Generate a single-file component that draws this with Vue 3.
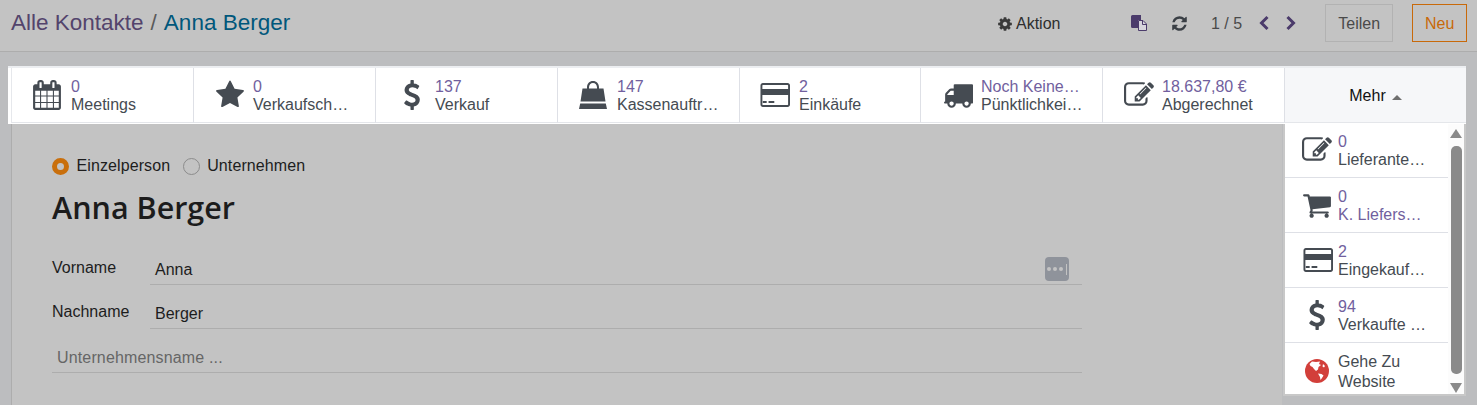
<template>
  <div class="page">
    <header class="control-panel">
      <div class="breadcrumb">
        <a class="crumb-link">Alle Kontakte</a>
        <span class="crumb-sep">/</span>
        <span class="crumb-active">Anna Berger</span>
      </div>
      <div class="action">
        <svg class="cog" viewBox="0 0 1792 1792"><path :d="icons.cog" /></svg>
        <span>Aktion</span>
      </div>
      <svg class="files" viewBox="0 0 16 16">
        <path d="M0 1.5Q0 0 1.5 0H10V5H7V13H1.5Q0 13 0 11.5z" fill="#4b3b6b" />
        <path d="M7.5 5.5H12L15.5 9V15.5H7.5z" fill="#d6d4dc" stroke="#4b3b6b" />
        <path d="M11.5 5.5V9.5H15.5" fill="none" stroke="#4b3b6b" />
      </svg>
      <svg class="refresh" viewBox="0 0 1792 1792"><path :d="icons.refresh" /></svg>
      <span class="pager">1 / 5</span>
      <svg class="chev chev-left" viewBox="0 0 12 16"><path d="M9.5 2 3.5 8l6 6" /></svg>
      <svg class="chev chev-right" viewBox="0 0 12 16"><path d="M2.5 2l6 6-6 6" /></svg>
      <button class="btn btn-share">Teilen</button>
      <button class="btn btn-new">Neu</button>
    </header>

    <main class="content">
      <div class="sheet-wrap">
        <div class="button-box">
          <div v-for="item in stats" :key="item.label" class="stat">
            <svg class="stat-icon" :class="item.cls" :viewBox="item.box" :preserveAspectRatio="item.ratio"><path :d="item.path" /></svg>
            <div class="stat-text">
              <span class="stat-value">{{ item.value }}</span>
              <span class="stat-label">{{ item.label }}</span>
            </div>
          </div>
          <div class="more">Mehr <i class="caret"></i></div>
        </div>

        <section class="sheet">
          <div class="radios">
            <span class="radio radio-on"></span>
            <span class="radio-label">Einzelperson</span>
            <span class="radio"></span>
            <span class="radio-label">Unternehmen</span>
          </div>
          <h1 class="name">Anna Berger</h1>
          <div class="fields">
            <div class="field">
              <label>Vorname</label>
              <div class="input">
                Anna
                <span class="dots"><i></i><i></i><i></i><b></b></span>
              </div>
            </div>
            <div class="field">
              <label>Nachname</label>
              <div class="input">Berger</div>
            </div>
            <div class="company">Unternehmensname ...</div>
          </div>
        </section>

        <div class="dropdown">
          <div class="menu-list">
            <div v-for="item in menu" :key="item.label" class="menu-item">
              <svg v-if="item.path" class="stat-icon" :class="item.cls" :viewBox="item.box" :preserveAspectRatio="item.ratio"><path :d="item.path" /></svg>
              <svg v-else class="globe" viewBox="0 0 24 24">
                <circle cx="12" cy="12" r="12" fill="#d23f3a" />
                <path d="M7 2.5L11 3 15 2.5 14 5 16 6 13.5 8 13 10.5 11 12 9 10 7.5 8 5.5 7 4.5 5zM13 14.5L16.5 15 18.5 16.5 17 19 15.5 21 15 18zM18 5l2 2-1 1.5-1.5-1z" fill="#fff" />
              </svg>
              <div class="stat-text">
                <span v-if="item.value" class="stat-value">{{ item.value }}</span>
                <span class="stat-label" :class="{ link: item.link, wrap: !item.value }">{{ item.label }}</span>
              </div>
            </div>
          </div>
          <div class="scrollbar">
            <i class="arrow arrow-up"></i>
            <div class="thumb"></div>
            <i class="arrow arrow-down"></i>
          </div>
        </div>
      </div>
    </main>
  </div>
</template>

<script setup>
const icons = {
  cog: 'M1152 896q0-106-75-181t-181-75-181 75-75 181 75 181 181 75 181-75 75-181zm512-109v222q0 12-8 23t-20 13l-185 28q-19 54-39 91 35 50 107 138 10 12 10 25t-9 23q-27 37-99 108t-94 71q-12 0-26-9l-138-108q-44 23-91 38-16 136-29 186-7 28-36 28h-222q-14 0-24.5-8.5t-11.5-21.5l-28-184q-49-16-90-37l-141 107q-10 9-25 9-14 0-25-11-126-114-165-168-7-10-7-23 0-12 8-23 15-21 51-66.5t54-70.5q-27-50-41-99l-183-27q-13-2-21-12.5t-8-23.5v-222q0-12 8-23t19-13l186-28q14-46 39-92-40-57-107-138-10-12-10-24 0-10 9-23 26-36 98.5-107.5t94.5-71.5q13 0 26 10l138 107q44-23 91-38 16-136 29-186 7-28 36-28h222q14 0 24.5 8.5t11.5 21.5l28 184q49 16 90 37l142-107q9-9 24-9 13 0 25 10 129 119 165 170 7 8 7 22 0 12-8 23-15 21-51 66.5t-54 70.5q26 50 41 98l183 28q13 2 21 12.5t8 23.5z',
  refresh: 'M1639 1056q0 5-1 7-64 268-268 434.5t-478 166.5q-146 0-282.5-55t-243.5-157l-129 129q-19 19-45 19t-45-19-19-45v-448q0-26 19-45t45-19h448q26 0 45 19t19 45-19 45l-137 137q71 66 161 102t187 36q134 0 250-65t186-179q11-17 53-117 8-23 30-23h192q13 0 22.5 9.5t9.5 22.5zm25-800v448q0 26-19 45t-45 19h-448q-26 0-45-19t-19-45 19-45l138-138q-148-137-349-137-134 0-250 65t-186 179q-11 17-53 117-8 23-30 23h-199q-13 0-22.5-9.5t-9.5-22.5v-7q65-268 270-434.5t480-166.5q146 0 284 55.5t245 156.5l130-129q19-19 45-19t45 19 19 45z',
  calendar: 'M192 1664h288v-288h-288v288zm352 0h320v-288h-320v288zm-352-352h288v-320h-288v320zm352 0h320v-320h-320v320zm-352-384h288v-288h-288v288zm736 736h320v-288h-320v288zm-384-736h320v-288h-320v288zm768 736h288v-288h-288v288zm-384-352h320v-320h-320v320zm-352-864v-288q0-13-9.5-22.5t-22.5-9.5h-64q-13 0-22.5 9.5t-9.5 22.5v288q0 13 9.5 22.5t22.5 9.5h64q13 0 22.5-9.5t9.5-22.5zm736 864h288v-320h-288v320zm-384-384h320v-288h-320v288zm384 0h288v-288h-288v288zm32-480v-288q0-13-9.5-22.5t-22.5-9.5h-64q-13 0-22.5 9.5t-9.5 22.5v288q0 13 9.5 22.5t22.5 9.5h64q13 0 22.5-9.5t9.5-22.5zm384-64v1280q0 52-38 90t-90 38h-1408q-52 0-90-38t-38-90v-1280q0-52 38-90t90-38h128v-96q0-66 47-113t113-47h64q66 0 113 47t47 113v96h384v-96q0-66 47-113t113-47h64q66 0 113 47t47 113v96h128q52 0 90 38t38 90z',
  star: 'M1728 647q0 22-26 48l-363 354 86 500q1 7 1 20 0 21-10.5 35.5t-30.5 14.5q-19 0-40-12l-449-236-449 236q-22 12-40 12-21 0-31.5-14.5t-10.5-35.5q0-6 2-20l86-500-364-354q-25-27-25-48 0-37 56-46l502-73 225-455q19-41 49-41t49 41l225 455 502 73q56 9 56 46z',
  dollar: 'M1362 1185q0 153-99.5 263.5t-258.5 136.5v175q0 14-9 23t-23 9h-135q-13 0-22.5-9.5t-9.5-22.5v-175q-66-9-127.5-31t-101.5-44.5-74-48-46.5-37.5-17.5-18q-17-21-2-41l103-135q7-10 23-12 15-2 24 9l2 2q113 99 243 125 37 8 74 8 81 0 142.5-43t61.5-122q0-28-15-53t-33.5-42-58.5-37.5-66-32-80-32.5q-39-16-61.5-25t-61.5-26.5-62.5-31-56.5-35.5-53.5-42.5-43.5-49-35.5-58-21-66.5-8.5-78q0-138 98-242t255-134v-180q0-13 9.5-22.5t22.5-9.5h135q14 0 23 9t9 23v176q57 6 110.5 23t87 33.5 63.5 37.5 39 29 15 14q17 18 5 38l-81 146q-8 15-23 16-14 3-27-7-3-3-14.5-12t-39-26.5-58.5-32-74.5-26-85.5-11.5q-95 0-155 43t-60 111q0 26 8.5 48t29.5 41.5 39.5 33 56 31 60.5 27 70 27.5q53 20 81 31.5t76 35 75.5 42.5 62 50 53 63.5 31.5 76.5 13 94z',
  bag: 'M8 7.5V6.5C8 2.5 10.5 0 14 0s6 2.5 6 6.5V7.5H24.5L26.5 20.5H1.5L3.5 7.5H8zM10 7.5H18V6.5C18 3.8 16.3 2 14 2S10 3.8 10 6.5V7.5zM1.2 22.5H26.8L28 28H0z',
  card: 'M1856 128q66 0 113 47t47 113v1216q0 66-47 113t-113 47h-1664q-66 0-113-47t-47-113v-1216q0-66 47-113t113-47h1664zm-1664 128q-13 0-22.5 9.5t-9.5 22.5v224h1728v-224q0-13-9.5-22.5t-22.5-9.5h-1664zm1664 1280q13 0 22.5-9.5t9.5-22.5v-608h-1728v608q0 13 9.5 22.5t22.5 9.5h1664zm-1664-128v-128h256v128h-256zm384 0v-128h384v128h-384z',
  truck: 'M640 1408q0-52-38-90t-90-38-90 38-38 90 38 90 90 38 90-38 38-90zm-384-512h384v-256h-158q-13 0-22 9l-195 195q-9 9-9 22v30zm1280 512q0-52-38-90t-90-38-90 38-38 90 38 90 90 38 90-38 38-90zm256-1088v1024q0 15-4 26.5t-13.5 18.5-16.5 11.5-23.5 6-22.5 2-25.5 0-22.5-.5q0 106-75 181t-181 75-181-75-75-181h-384q0 106-75 181t-181 75-181-75-75-181h-64q-3 0-22.5.5t-25.5 0-22.5-2-23.5-6-16.5-11.5-13.5-18.5-4-26.5q0-26 19-45t45-19v-320q0-8-.5-35t0-38 2.5-34.5 6.5-37 14-30.5 22.5-30l198-198q19-19 50.5-32t58.5-13h160v-192q0-26 19-45t45-19h1024q26 0 45 19t19 45z',
  edit: 'M888 1184l116-116-152-152-116 116v56h96v96h56zm440-720q-16-16-33 1l-350 350q-17 17-1 33t33-1l350-350q17-17 1-33zm80 594v190q0 119-84.5 203.5t-203.5 84.5h-832q-119 0-203.5-84.5t-84.5-203.5v-832q0-119 84.5-203.5t203.5-84.5h832q63 0 117 25 15 7 18 23 3 17-9 29l-49 49q-14 14-32 8-23-6-45-6h-832q-66 0-113 47t-47 113v832q0 66 47 113t113 47h832q66 0 113-47t47-113v-126q0-13 9-22l64-64q15-15 35-7t20 29zm-96-738l288 288-672 672h-288v-288zm444 132l-92 92-288-288 92-92q28-28 68-28t68 28l152 152q28 28 28 68t-28 68z',
  cart: 'M704 1536q0 52-38 90t-90 38-90-38-38-90 38-90 90-38 90 38 38 90zm896 0q0 52-38 90t-90 38-90-38-38-90 38-90 90-38 90 38 38 90zm128-1088v512q0 24-16.5 42.5t-40.5 21.5l-1044 122q13 60 13 70 0 16-24 64h920q26 0 45 19t19 45-19 45-45 19h-1024q-26 0-45-19t-19-45q0-11 8-31.5t16-36 21.5-40 15.5-29.5l-177-823h-204q-26 0-45-19t-19-45 19-45 45-19h256q16 0 28.5 6.5t19.5 15.5 13 24.5 8 26 5.5 29.5 4.5 26h1201q26 0 45 19t19 45z'
}

const square = '0 0 1792 1792'
const cardBox = '0 128 2016 1536'

const stats = [
  { value: '0', label: 'Meetings', path: icons.calendar, box: square, cls: 'i-calendar' },
  { value: '0', label: 'Verkaufsch…', path: icons.star, box: square, cls: 'i-star' },
  { value: '137', label: 'Verkauf', path: icons.dollar, box: square, cls: 'i-dollar' },
  { value: '147', label: 'Kassenauftr…', path: icons.bag, box: '0 0 28 28', cls: 'i-bag' },
  { value: '2', label: 'Einkäufe', path: icons.card, box: cardBox, cls: 'i-card', ratio: 'none' },
  { value: 'Noch Keine…', label: 'Pünktlichkei…', path: icons.truck, box: square, cls: 'i-truck' },
  { value: '18.637,80 €', label: 'Abgerechnet', path: icons.edit, box: square, cls: 'i-edit' }
]

const menu = [
  { value: '0', label: 'Lieferante…', path: icons.edit, box: square, cls: 'i-edit' },
  { value: '0', label: 'K. Liefers…', path: icons.cart, box: square, cls: 'i-cart', link: true },
  { value: '2', label: 'Eingekauf…', path: icons.card, box: cardBox, cls: 'i-card', ratio: 'none' },
  { value: '94', label: 'Verkaufte …', path: icons.dollar, box: square, cls: 'i-dollar' },
  { value: '', label: 'Gehe Zu Website' }
]
</script>

<style>
html,
body {
  margin: 0;
  background: #bcbdbf;
}
</style>

<style scoped>
.page {
  height: 405px;
  overflow: hidden;
  font-family: "Liberation Sans", Arial, sans-serif;
  font-size: 16px;
  color: #4c4c4c;
}

.control-panel {
  height: 51px;
  box-sizing: content-box;
  display: flex;
  align-items: center;
  padding: 0 0 0 11px;
  background: #c3c3c3;
  border-bottom: 1px solid #adadad;
}

.breadcrumb {
  display: flex;
  align-items: center;
  font-size: 22.5px;
  width: 980px;
  flex: none;
  margin-top: -5px;
}

.crumb-link {
  color: #53446c;
}

.crumb-sep {
  color: #5a5a5a;
  margin: 0 7px;
}

.crumb-active {
  color: #00577b;
}

.action {
  width: 134px;
  flex: none;
  margin-left: 6px;
  margin-top: -4px;
  display: flex;
  align-items: center;
  gap: 3px;
  color: #2e2e2e;
}

.cog {
  width: 16px;
  height: 16px;
  fill: #3a3a3a;
}

.files {
  width: 16px;
  height: 16px;
  flex: none;
  margin-top: -5px;
}

.refresh {
  width: 17px;
  height: 17px;
  flex: none;
  margin: -5px 0 0 24px;
  fill: #3a3f45;
}

.pager {
  margin: -4px 0 0 23px;
  color: #4a4a4a;
  white-space: nowrap;
}

.chev {
  width: 12px;
  height: 16px;
  flex: none;
  margin-top: -5px;
  fill: none;
  stroke: #4b3b6b;
  stroke-width: 3;
}

.chev-left {
  margin-left: 16px;
}

.chev-right {
  margin-left: 15px;
}

.btn {
  height: 38px;
  margin-top: -5px;
  box-sizing: border-box;
  background: transparent;
  font: inherit;
  padding: 2px 0 0;
}

.btn-share {
  width: 68px;
  margin-left: 28px;
  border: 1px solid #b2b2b2;
  color: #4a4a4a;
}

.btn-new {
  width: 55px;
  margin-left: 19px;
  border: 1px solid #c8690a;
  color: #c8690a;
}

.content {
  padding-top: 14px;
}

.sheet-wrap {
  position: relative;
  padding: 0 11px 0 8px;
}

.button-box {
  position: relative;
  z-index: 2;
  display: flex;
  height: 58px;
  box-sizing: border-box;
  background: #fff;
  border-top: 2px solid #eceef1;
  padding: 0 0 1px 4px;
}

.stat {
  width: 182px;
  flex: none;
  box-sizing: border-box;
  display: flex;
  align-items: center;
  border-right: 1px solid #dee0e6;
  border-bottom: 1px solid #e4e6ea;
  padding-left: 21px;
}

.stat:nth-child(5) {
  width: 181px;
}

.stat:first-child {
  box-shadow: -1px 0 0 #e6e8ec;
}

.stat-icon {
  width: 30px;
  height: 30px;
  flex: none;
  fill: #454b52;
}

.stat-text {
  display: flex;
  flex-direction: column;
  line-height: 18.5px;
  margin: 2px 0 0 8px;
  white-space: nowrap;
}

.stat-value {
  color: #715f9e;
}

.stat-label {
  color: #454b52;
}

.stat-label.link {
  color: #715f9e;
}

.stat-label.wrap {
  width: 80px;
  white-space: normal;
  line-height: 20px;
}

.i-calendar {
  margin: 0 1px 0 -1px;
}

.i-truck {
  margin-left: 1px;
}

.i-card {
  height: 24px;
  margin: 0 1px 0 -1px;
}

.i-bag {
  width: 28px;
  height: 28px;
  margin-right: 2px;
}

.i-bag path {
  fill-rule: evenodd;
}

.more {
  flex: 1;
  background: #f6f7f9;
  border-bottom: 1px solid #e4e6ea;
  padding-top: 2px;
  display: flex;
  align-items: center;
  justify-content: center;
  gap: 6px;
  color: #111;
}

.caret {
  width: 0;
  height: 0;
  border: 5px solid transparent;
  border-top: 0;
  border-bottom-color: #6f6f6f;
  margin-top: 2px;
}

.sheet {
  margin-left: 3px;
  width: 1271px;
  height: 300px;
  box-sizing: border-box;
  background: #c3c3c3;
  border-left: 1px solid #adadad;
  padding: 32px 0 0 40px;
  color: #1d1d1d;
}

.radios {
  display: flex;
  align-items: center;
  height: 20px;
  letter-spacing: 0.1px;
}

.radio {
  width: 17px;
  height: 17px;
  box-sizing: border-box;
  border-radius: 50%;
  border: 1px solid #8c8c8c;
  flex: none;
}

.radio-on {
  border: 5px solid #c96f0c;
  background: #c3c3c3;
}

.radio-label {
  margin: 0 12.5px 0 7.5px;
}

.name {
  margin: 11px 0 0;
  font-family: "Open Sans", "Noto Sans", sans-serif;
  font-size: 30.5px;
  font-weight: 600;
  line-height: 40px;
  color: #1c1c1c;
}

.fields {
  margin-top: 14px;
}

.field {
  display: flex;
  width: 1030px;
  height: 44px;
  box-sizing: border-box;
}

.field label {
  width: 98px;
  flex: none;
  padding-top: 18px;
  line-height: 18px;
}

.input {
  flex: 1;
  position: relative;
  padding: 20px 0 0 5px;
  line-height: 18px;
  border-bottom: 1px solid #adadad;
}

.dots {
  position: absolute;
  right: 13px;
  top: 16px;
  width: 24px;
  height: 24px;
  border-radius: 4px;
  background: #8f939b;
  display: flex;
  align-items: center;
  justify-content: center;
  gap: 2px;
}

.dots i {
  width: 4px;
  height: 4px;
  border-radius: 50%;
  background: #c3c3c3;
}

.dots b {
  width: 1px;
  height: 11px;
  background: #c3c3c3;
  margin-left: 1px;
}

.company {
  width: 1030px;
  height: 44px;
  box-sizing: border-box;
  padding: 20px 0 0 5px;
  line-height: 18px;
  color: #666;
  letter-spacing: 0.15px;
  border-bottom: 1px solid #adadad;
}

.dropdown {
  position: absolute;
  z-index: 1;
  left: 1285px;
  top: 58px;
  width: 179px;
  height: 270px;
  display: flex;
  overflow: hidden;
  background: #fff;
  box-shadow: 0 0 0 2px #c8c8c8;
}

.menu-list {
  width: 163px;
  flex: none;
  margin-top: -1px;
}

.menu-item {
  height: 55px;
  box-sizing: border-box;
  display: flex;
  align-items: center;
  padding-left: 17px;
  border-bottom: 1px solid #dee0e6;
}

.menu-item:last-child {
  border-bottom: 0;
}

.menu-item .stat-text {
  margin-left: 6px;
}

.menu-item .i-card {
  margin: 0 -1px 0 1px;
}

.scrollbar {
  flex: 1;
  background: #fcfcfc;
  display: flex;
  flex-direction: column;
  align-items: center;
  padding: 5px 0 1px;
}

.thumb {
  flex: 1;
  width: 11px;
  margin: 8px 0 9px;
  border-radius: 5px;
  background: #8a8a8a;
}

.arrow {
  width: 0;
  height: 0;
  border: 6.5px solid transparent;
}

.arrow-up {
  border-top: 0;
  border-bottom: 9px solid #8a8a8a;
}

.arrow-down {
  border-bottom: 0;
  border-top: 10px solid #8a8a8a;
}

.globe {
  width: 24px;
  height: 24px;
  flex: none;
  margin: 0 3px;
}
</style>
